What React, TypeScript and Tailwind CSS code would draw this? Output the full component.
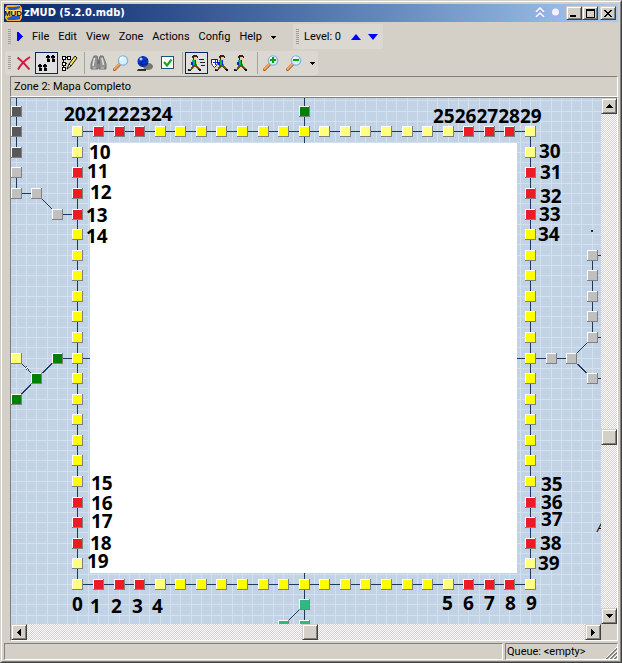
import React from "react";

const FIRST_X = 77.4;
const FIRST_Y = 131.3;
const PITCH = 20.57;
const LAST = 22;

const YELLOW = "#ffff00";
const PALE = "#ffff80";
const RED = "#ed1c24";
const GRAY = "#c0c0c0";
const DARK = "#585858";
const GREEN = "#008000";
const TEAL = "#30b880";
const LINE = "#1c3a5e";

type Room = { x: number; y: number; color: string };

const colX = (k: number) => Math.round(FIRST_X + PITCH * k);
const rowY = (k: number) => Math.round(FIRST_Y + PITCH * k);

function edgeColor(k: number) {
  if (k === 0 || k === LAST) return PALE;
  if (k <= 3 || k >= 19) return RED;
  return null;
}

function sideColor(k: number) {
  if (k <= 1 || k >= 21) return PALE;
  if (k <= 4 || k >= 18) return RED;
  return YELLOW;
}

const rooms: Room[] = [];
for (let k = 0; k <= LAST; k++) {
  rooms.push({ x: colX(k), y: rowY(0), color: edgeColor(k) ?? (k >= 12 ? PALE : YELLOW) });
  rooms.push({ x: colX(k), y: rowY(LAST), color: edgeColor(k) ?? (k === 4 || k === 18 ? PALE : YELLOW) });
}
for (let k = 1; k < LAST; k++) {
  rooms.push({ x: colX(0), y: rowY(k), color: sideColor(k) });
  rooms.push({ x: colX(LAST), y: rowY(k), color: sideColor(k) });
}

const at = (c: number, r: number, color: string): Room => ({ x: colX(c), y: rowY(r), color });
rooms.push(
  at(-3, -1, DARK), at(-3, 0, DARK), at(-3, 1, DARK),
  at(-3, 2, GRAY), at(-3, 3, GRAY), at(-2, 3, GRAY), at(-1, 4, GRAY),
  at(-3, 11, PALE), at(-1, 11, GREEN), at(-2, 12, GREEN), at(-3, 13, GREEN),
  at(11, -1, GREEN), at(11, 23, TEAL), at(10, 24, TEAL), at(11, 24, TEAL),
  at(23, 11, GRAY), at(24, 11, GRAY),
  at(25, 6, GRAY), at(25, 7, GRAY), at(25, 8, GRAY), at(25, 9, GRAY), at(25, 10, GRAY), at(25, 12, GRAY),
);

// Each link runs between two grid positions: column, row, column, row.
const links: [number, number, number, number][] = [
  [0, 0, 22, 0], [0, 22, 22, 22], [0, 0, 0, 22], [22, 0, 22, 22],
  [-3, -2, -3, 1], [-3, 2, -3, 3], [-3, 3, -2, 3], [-2, 3, -1, 4], [-1, 4, 0, 4],
  [-4, 1, -3, 1], [-4, 2, -3, 2],
  [-3, 11, -2, 12], [-2, 12, -1, 11], [-2, 12, -3, 13], [-4, 13, -3, 13],
  [-1, 11, 1, 11], [11, -2, 11, 1], [11, 21, 11, 24], [11, 23, 10, 24],
  [21, 11, 24, 11], [24, 11, 25, 10], [24, 11, 25, 12],
  [25, 6, 25, 10], [25, 6, 26, 6], [25, 10, 26, 10], [25, 12, 26, 12],
];

const labels: [string, number, number][] = [
  ["2021222324", 64, 114], ["2526272829", 433, 116],
  ["10", 89, 152], ["11", 87, 171], ["12", 90, 192], ["13", 86, 215], ["14", 86, 236],
  ["15", 91, 483], ["16", 91, 503], ["17", 91, 521], ["18", 90, 543], ["19", 87, 561],
  ["30", 539, 151], ["31", 540, 172], ["32", 540, 196], ["33", 539, 214], ["34", 538, 234],
  ["35", 541, 484], ["36", 541, 502], ["37", 541, 519], ["38", 540, 543], ["39", 538, 563],
  ["0", 72, 604], ["1", 90, 606], ["2", 111, 606], ["3", 132, 606], ["4", 152, 606],
  ["5", 442, 603], ["6", 463, 603], ["7", 484, 603], ["8", 505, 603], ["9", 526, 603],
];

function ZoneMap() {
  const grid: React.ReactNode[] = [];
  for (let i = -7; i < 56; i++) {
    const gx = Math.round(FIRST_X + (PITCH / 2) * i);
    const gy = Math.round(FIRST_Y + (PITCH / 2) * i);
    grid.push(<path key={i} d={`M${gx} 98h1v900h-1zM11 ${gy}h1200v1h-1200z`} fill="#d3e0ee" />);
  }
  return (
    <div className="relative min-w-0 flex-1 overflow-hidden bg-[#c3d3e6]">
      <svg className="absolute left-0 top-0" width="1200" height="900" viewBox="11 98 1200 900" shapeRendering="crispEdges" role="img" aria-label="Zone map">
        {grid}
        {links.map(([a, b, c, d], i) => (
          <line key={i} x1={colX(a) + 0.5} y1={rowY(b) + 0.5} x2={colX(c) + 0.5} y2={rowY(d) + 0.5} stroke={LINE} />
        ))}
        <rect x="90" y="143" width="427" height="430" fill="#fff" />
        <path d="M26 366h1v1h1v1h1v2h-2v-1h-1v-1h-2v-1h2z" fill="#fff" />
        <path d="M26 366h1v1h-1zM25 367h1v1h-1zM27 368h1v1h-1zM26 369h1v1h-1zM28 369h1v1h-1z" fill={LINE} />
        {rooms.map((r, i) => (
          <g key={i}>
            <rect x={r.x - 5} y={r.y - 5} width="11" height="11" fill="#808080" />
            <rect x={r.x - 5} y={r.y - 5} width="10" height="10" fill="#fff" />
            <rect x={r.x - 4} y={r.y - 4} width="9" height="9" fill={r.color} />
          </g>
        ))}
        <rect x="591" y="230" width="2" height="2" fill="#1c2a3a" />
      </svg>
      <div className="absolute -left-[11px] -top-[98px] font-['Noto_Sans','Open_Sans',sans-serif] text-[19px] font-bold leading-[14px] text-black">
        {labels.map(([text, x, y]) => (
          <span key={text} className="absolute whitespace-nowrap" style={{ left: x, top: y - 7 }}>{text}</span>
        ))}
        <span className="absolute left-[597px] top-[521px] text-[12px] font-normal italic">A</span>
      </div>
    </div>
  );
}

const RAISED =
  "flex shrink-0 items-center justify-center bg-[#d4d0c8] border border-t-[#d4d0c8] border-l-[#d4d0c8] border-r-[#404040] border-b-[#404040] shadow-[inset_1px_1px_0_#fff,inset_-1px_-1px_0_#808080]";
const TRACK = "bg-[repeating-conic-gradient(#ffffff_0_25%,#d4d0c8_0_50%)] bg-[length:2px_2px]";

function Arrow({ dir }: { dir: "up" | "down" | "left" | "right" }) {
  const d = {
    up: "M3 0h1v1h1v1h1v1h1v1H0V3h1V2h1V1h1z",
    down: "M0 0h7v1H6v1H5v1H4v1H3V3H2V2H1V1H0z",
    left: "M3 0h1v7H3V6H2V5H1V4H0V3h1V2h1V1h1z",
    right: "M0 0h1v1h1v1h1v1h1v1H3v1H2v1H1v1H0z",
  }[dir];
  const tall = dir === "left" || dir === "right";
  return (
    <svg width={tall ? 4 : 7} height={tall ? 7 : 4} shapeRendering="crispEdges" aria-hidden="true">
      <path d={d} />
    </svg>
  );
}

function SmallArrow() {
  return (
    <svg width="5" height="3" shapeRendering="crispEdges" aria-hidden="true">
      <path d="M0 0h5v1H4v1H3v1H2V2H1V1H0z" />
    </svg>
  );
}

function Grip({ tall = false }: { tall?: boolean }) {
  return (
    <span
      className={`w-[3px] shrink-0 bg-[repeating-linear-gradient(#a09d97_0_1px,transparent_1px_2px)] ${tall ? "h-[15px]" : "h-[14px]"}`}
    />
  );
}

function Walker() {
  return (
    <g shapeRendering="crispEdges">
      <path d="M5 0h4v1h1v2H9v2H5V3H4V1h1z" fill="#402010" />
      <path d="M6 2h3v3H6z" fill="#f4c898" />
      <path d="M4 5h4v1h1v4H4V8H3V6h1z" fill="#08b838" />
      <path d="M2 6h2v2H3v2H1V8h1zM8 6h1v1h2v1H9v1H8z" fill="#f0d0a0" />
      <path d="M3 7h2v3H3zM7 5h1v5H7z" fill="#1020e0" />
      <path d="M4 10h5v1h1v1h1v1h1v2h-2v-1H9v-1H8v-1H6v1H5v1H4v1H3v1H1v-2h2v-2h1z" fill="#685018" />
      <path d="M0 14h1v1h2v1H0zM10 14h3v2h-2v-1h-1z" fill="#101010" />
    </g>
  );
}

function Lens({ mark }: { mark?: "plus" | "minus" }) {
  return (
    <>
      <path d="M1.5 14.5l5.5-5.5" stroke="#9a5020" strokeWidth="3" strokeLinecap="round" />
      <path d="M1.5 14l5-5" stroke="#f8a858" strokeWidth="2" strokeLinecap="round" />
      <circle cx="10" cy="5.5" r="4.6" fill="#d8f2fc" stroke="#8ab4d8" strokeWidth="1.4" />
      <path d="M7 5a3 3 0 0 1 3-3" stroke="#fff" strokeWidth="1.2" fill="none" />
      {mark && <path d={mark === "plus" ? "M7 5h6M10 2v6" : "M7 5h6"} stroke="#08a010" strokeWidth="2" shapeRendering="crispEdges" />}
    </>
  );
}

const ICONS: Record<string, React.ReactNode> = {
  Delete: <path d="M2.500 2.500c4 3 8 7 12 12M15 2C10 5 6 9 3 14.500" stroke="#d8143c" strokeWidth="2" fill="none" />,
  "Follow mode": (
    <g shapeRendering="crispEdges" fill="#000">
      <path d="M9 0h2v1h1v2H8V1h1zM14 0h2v1h1v2h-4V1h1zM9 4h3v3H9zM14 4h3v3h-3z" />
      <path d="M9 3h2v1H9zM14 3h2v1h-2z" fill="#404040" />
      <path d="M1 9h2v1h1v2H0v-2h1zM6 9h2v1h1v2H5v-2h1zM1 13h3v3H1zM6 13h3v3H6z" />
      <path d="M1 12h2v1H1zM6 12h2v1H6z" fill="#404040" />
    </g>
  ),
  "Edit map": (
    <>
      <path d="M1 2.5h7M1 8.5h5M2.5 1v12M7.5 2v2" stroke="#000" fill="none" />
      <path d="M1 1h3v3H1zM6 1h3v3H6zM1 7h3v3H1zM1 12h3v3H1z" fill="#fff" stroke="#000" shapeRendering="crispEdges" />
      <path d="M8 9l6-8 2 2-6 8z" fill="#f4e850" stroke="#111" />
      <path d="M8 9l2 2-4 3z" fill="#fff" stroke="#111" />
    </>
  ),
  Find: (
    <>
      <path d="M4 1h3l1 4v9H1V9zM10 1h3l3 8v5H9V5z" fill="#929292" stroke="#707070" />
      <path d="M4.5 3L3 11M12 3l1.5 7" stroke="#e0e0e0" strokeWidth="1.5" />
      <path d="M7 5h3v4H7z" fill="#707070" />
      <path d="M3 13h3M11 13h3" stroke="#c8c8c8" strokeWidth="1" />
    </>
  ),
  Search: <Lens />,
  World: (
    <>
      <ellipse cx="12" cy="11.5" rx="5" ry="3.5" fill="#77756f" />
      <path d="M2 14h8v2H1z" fill="#303030" />
      <circle cx="7" cy="6.5" r="5.5" fill="#0838c8" />
      <path d="M3 4c2 3 6 3 9 0M2 8c3 2 8 2 10 0M7 1c-2 3-2 8 0 11" stroke="#002080" fill="none" />
      <circle cx="5" cy="4" r="1.5" fill="#a8d0ff" />
    </>
  ),
  Options: (
    <>
      <rect x="2.5" y="1.5" width="12" height="12" fill="#fff" stroke="#1c5180" />
      <path d="M5 7l3 3.5 4.5-6" stroke="#21a121" strokeWidth="2.2" fill="none" />
    </>
  ),
  "Fast walk": (
    <>
      <Walker />
      <path d="M11 4h5M12 7h5M13 10h4" stroke="#202020" shapeRendering="crispEdges" />
    </>
  ),
  "Safe walk": (
    <>
      <g transform="translate(4 0)"><Walker /></g>
      <path d="M.5 4.5h6v4l-1 2-2 2-2-2-1-2z" fill="#fff" stroke="#222" />
      <path d="M4 5v5M2 7h4" stroke="#2030e0" shapeRendering="crispEdges" />
    </>
  ),
  "Slow walk": <Walker />,
  "Zoom in": <Lens mark="plus" />,
  "Zoom out": <Lens mark="minus" />,
};

function Tool({ name, pressed = false }: { name: string; pressed?: boolean }) {
  return (
    <button
      type="button"
      aria-label={name}
      title={name}
      className={`flex h-[22px] w-[23px] shrink-0 items-center justify-center border ${pressed ? "border-[#0a246a] bg-[#e0e0e2]" : "border-transparent"}`}
    >
      <svg width="17" height="16" viewBox="0 0 17 16" fill="none" aria-hidden="true">{ICONS[name]}</svg>
    </button>
  );
}

const Divider = () => <span className="mx-[2px] h-[22px] w-px shrink-0 border-r border-[#a6a39d] box-content" />;

function AppLogo() {
  return (
    <svg width="17" height="16" viewBox="0 0 17 16" aria-hidden="true" className="shrink-0">
      <path d="M2 0h13l2 3v10l-2 3H2l-2-3V3z" fill="#f8b020" />
      <path d="M2 2h7l6-1v2l-5 2H4zM2 13l5-2h8v3l-5 1H3z" fill="#2458c8" />
      <path d="M0 5h17v6H0z" fill="#ffd868" />
      <text x="8" y="11" textAnchor="middle" fontSize="8" fontWeight="700" fontFamily="Liberation Sans, sans-serif" fill="#101010">MUD</text>
    </svg>
  );
}

export default function App() {
  return (
    <div className="h-screen min-h-[300px] border border-t-[#d4d0c8] border-l-[#d4d0c8] border-r-[#404040] border-b-[#404040] bg-[#d4d0c8] font-[Roboto,'DejaVu_Sans_Condensed',sans-serif] text-[11px] leading-4 text-black">
      <div className="flex h-full flex-col border border-t-white border-l-white border-r-[#808080] border-b-[#808080] px-[2px] pb-px pt-[2px]">
        <header className="flex h-[18px] shrink-0 items-center bg-linear-to-r from-[#0a246a] to-[#a6caf0] pl-px pr-[2px]">
          <AppLogo />
          <h1 className="ml-[2px] min-w-0 flex-1 truncate font-['DejaVu_Sans_Condensed',sans-serif] font-bold text-white">zMUD (5.2.0.mdb)</h1>
          <button type="button" aria-label="Roll up" className="mr-[6px]">
            <svg width="10" height="12" viewBox="0 0 10 12" fill="none" aria-hidden="true">
              <path d="M1 6l4-4 4 4M1 11l4-4 4 4" stroke="#9898f0" strokeWidth="2" />
              <path d="M1 5l4-4 4 4M1 10l4-4 4 4" stroke="#fff" strokeWidth="1.5" />
            </svg>
          </button>
          <button type="button" aria-label="Stay on top" className="mr-[5px]">
            <svg width="10" height="10" aria-hidden="true">
              <circle cx="5" cy="5" r="4.5" fill="#a8a8f8" />
              <circle cx="4.5" cy="4" r="3.5" fill="#f0f2ff" />
            </svg>
          </button>
          <button type="button" aria-label="Minimize" className={`${RAISED} h-[14px] w-4`}>
            <svg width="8" height="8" aria-hidden="true"><path d="M0 6h6v2H0z" /></svg>
          </button>
          <button type="button" aria-label="Maximize" className={`${RAISED} h-[14px] w-4`}>
            <svg width="9" height="9" shapeRendering="crispEdges" aria-hidden="true"><path fillRule="evenodd" d="M0 0h9v9H0zM1 2v6h7V2z" /></svg>
          </button>
          <button type="button" aria-label="Close" className={`${RAISED} ml-[2px] h-[14px] w-4`}>
            <svg width="8" height="7" shapeRendering="crispEdges" aria-hidden="true">
              <path d="M0 0h2v1h1v1h2V1h1V0h2v1H7v1H6v1H5v1h1v1h1v1h1v1H6V6H5V5H3v1H2v1H0V6h1V5h1V4h1V3H2V2H1V1H0z" />
            </svg>
          </button>
        </header>

        <div className="flex shrink-0 items-center pl-px pt-[2px]">
          <nav className="flex h-[25px] w-[285px] items-center pl-[3px]">
            <Grip tall />
            <svg className="ml-[6px] mr-[9px] shrink-0" width="6" height="9" shapeRendering="crispEdges" aria-hidden="true">
              <path d="M0 0h2v1h1v1h1v1h1v1h1v1H5v1H4v1H3v1H2v1H0z" fill="#0000ff" />
            </svg>
            <div className="flex items-center gap-[9px] whitespace-nowrap pt-px">
              {["File", "Edit", "View", "Zone", "Actions", "Config", "Help"].map((m) => (
                <button key={m} type="button">{m}</button>
              ))}
              <button type="button" aria-label="More menus"><SmallArrow /></button>
            </div>
          </nav>
          <div className="ml-[3px] flex h-[25px] w-[90px] items-center rounded-[2px] bg-[#dbd8d1] pl-[3px]">
            <Grip tall />
            <span className="ml-[5px] flex-1 whitespace-nowrap pt-px">Level: 0</span>
            <button type="button" aria-label="Level up" className="mr-[7px]">
              <svg width="10" height="6" aria-hidden="true"><path d="M0 6l5-6 5 6z" fill="#0000ff" /></svg>
            </button>
            <button type="button" aria-label="Level down" className="mr-[5px]">
              <svg width="10" height="6" aria-hidden="true"><path d="M0 0h10L5 6z" fill="#0000ff" /></svg>
            </button>
          </div>
        </div>

        <div className="mt-[2px] flex shrink-0 pb-px pl-px">
          <div role="toolbar" aria-label="Map tools" className="flex h-6 items-center rounded-[2px] bg-[#dbd8d1] pl-[3px]">
            <Grip />
            <span className="w-px" />
            <Tool name="Delete" />
            <Tool name="Follow mode" pressed />
            <Tool name="Edit map" />
            <Divider />
            <Tool name="Find" />
            <Tool name="Search" />
            <Tool name="World" />
            <Tool name="Options" />
            <Divider />
            <Tool name="Fast walk" pressed />
            <Tool name="Safe walk" />
            <Tool name="Slow walk" />
            <Divider />
            <Tool name="Zoom in" />
            <Tool name="Zoom out" />
            <button type="button" aria-label="More tools" className="flex h-[22px] w-3 items-center justify-center"><SmallArrow /></button>
          </div>
        </div>

        <div className="ml-[6px] h-[21px] shrink-0 border border-b-white border-l-[#808080] border-r-white border-t-[#808080] pl-[3px] pt-[2px]">
          Zone 2: Mapa Completo
        </div>

        <main className="ml-[6px] flex min-h-0 flex-1 flex-col border border-b-white border-l-[#808080] border-r-white border-t-[#808080]">
          <div className="flex min-h-0 flex-1">
            <ZoneMap />
            <div className={`flex w-4 shrink-0 flex-col ${TRACK}`}>
              <button type="button" aria-label="Scroll up" className={`${RAISED} size-4`}><Arrow dir="up" /></button>
              <span className="flex-[315]" />
              <span className={`${RAISED} size-4`} />
              <span className="flex-[163]" />
              <button type="button" aria-label="Scroll down" className={`${RAISED} size-4`}><Arrow dir="down" /></button>
            </div>
          </div>
          <div className="flex h-4 shrink-0">
            <div className={`flex flex-1 ${TRACK}`}>
              <button type="button" aria-label="Scroll left" className={`${RAISED} size-4`}><Arrow dir="left" /></button>
              <span className="flex-[275]" />
              <span className={`${RAISED} size-4`} />
              <span className="flex-[267]" />
              <button type="button" aria-label="Scroll right" className={`${RAISED} size-4`}><Arrow dir="right" /></button>
            </div>
            <span className="w-4 bg-[#d4d0c8]" />
          </div>
        </main>

        <footer className="mt-[2px] flex h-[17px] shrink-0 gap-[2px]">
          <div className="flex-1 border border-b-white border-l-[#808080] border-r-white border-t-[#808080]" />
          <div className="flex w-[113px] justify-between whitespace-nowrap border border-b-white border-l-[#808080] border-r-white border-t-[#808080] pl-px">
            <span>Queue: &lt;empty&gt;</span>
            <svg width="12" height="13" className="self-end" aria-hidden="true">
              <path d="M0 13L12 1M4 13l8-8M8 13l4-4" stroke="#fff" />
              <path d="M1 13L12 2M2 13L12 3M5 13l7-7M6 13l6-6M9 13l3-3M10 13l2-2" stroke="#808080" />
            </svg>
          </div>
        </footer>
      </div>
    </div>
  );
}
